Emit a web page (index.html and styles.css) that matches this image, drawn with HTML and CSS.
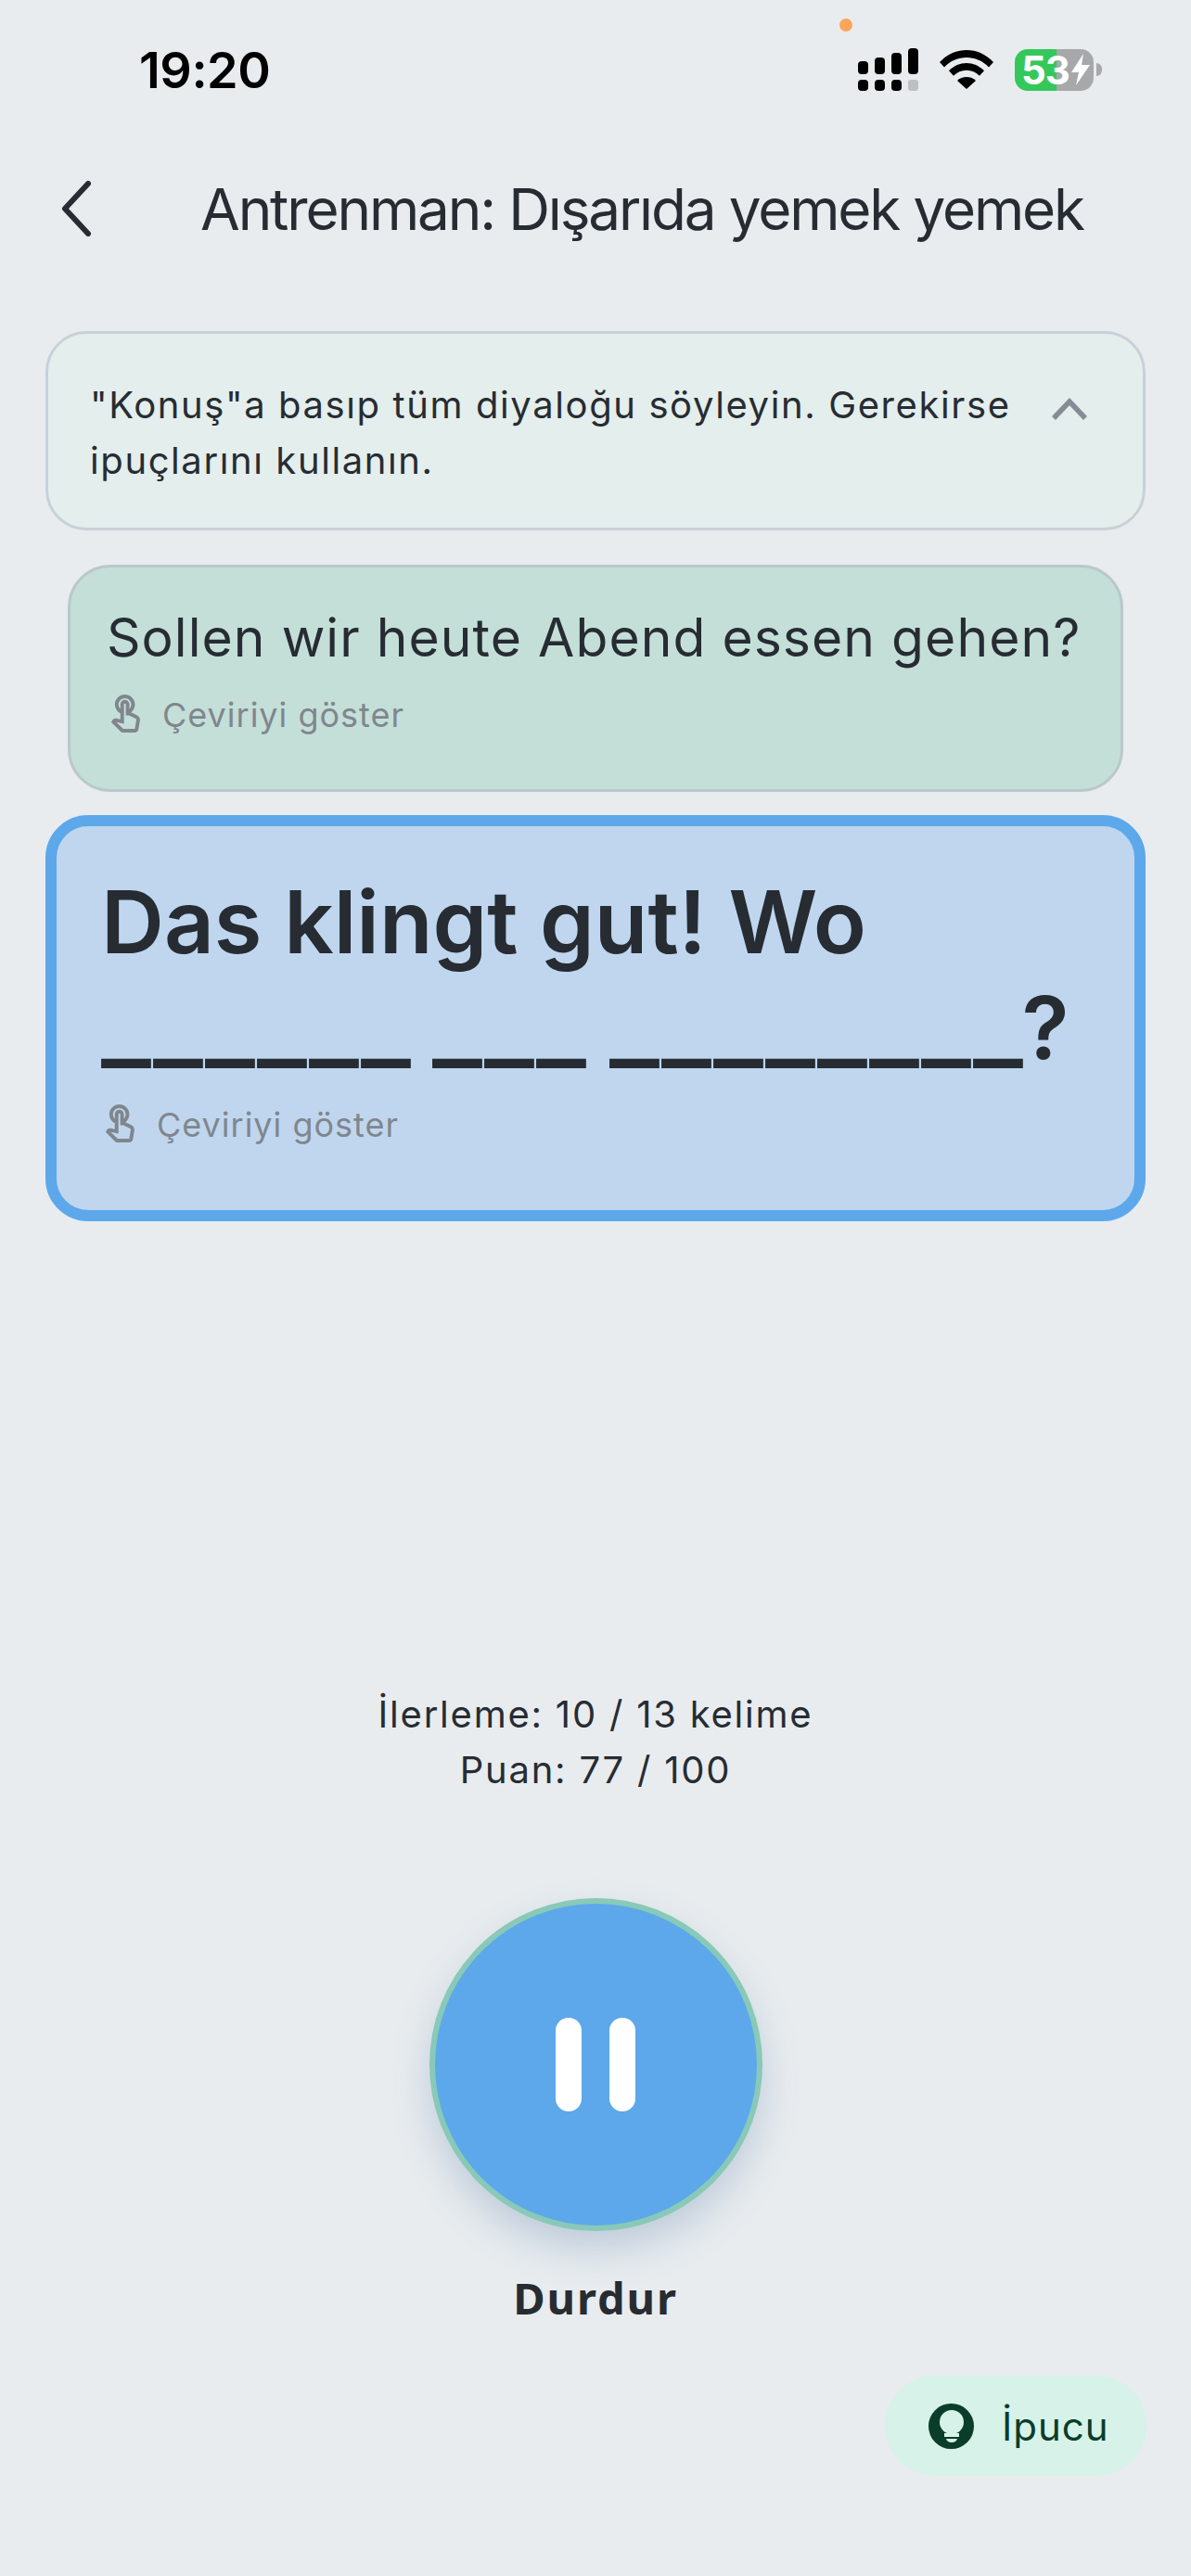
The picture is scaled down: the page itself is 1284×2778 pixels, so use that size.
FILE: index.html
```html
<!DOCTYPE html>
<html lang="tr">
<head>
  <meta charset="UTF-8">
  <title>Antrenman</title>
  <link rel="stylesheet" href="styles.css">
</head>
<body>
  <div class="screen">
    <span class="mic-dot"></span>
    <div class="status-bar">
      <span class="time">19:20</span>
      <div class="status-icons">
        <svg class="signal" width="65" height="46" viewBox="0 0 65 46" fill="#000">
          <rect x="0" y="14" width="11" height="14" rx="4"/>
          <rect x="18" y="10" width="11" height="18" rx="4"/>
          <rect x="36" y="5" width="11" height="23" rx="4"/>
          <rect x="54" y="0" width="11" height="28" rx="4"/>
          <rect x="0" y="34" width="11" height="12" rx="4"/>
          <rect x="18" y="34" width="11" height="12" rx="4"/>
          <rect x="36" y="34" width="11" height="12" rx="4"/>
          <rect x="54" y="34" width="11" height="12" rx="3" fill="#bcc0c3"/>
        </svg>
        <svg class="wifi" width="58" height="42" viewBox="0 0 58 42" fill="#000">
          <path d="M29 0C18 0 8 4.500 0 13l5 5.500C11.500 11.500 20 8 29 8s17.500 3.500 24 10.500l5-5.500C50 4.500 40 0 29 0z"/>
          <path d="M29 14c-7 0-13.500 2.800-19 8.200l5 5.600c3.800-3.800 8.700-6 14-6s10.200 2.200 14 6l5-5.600C42.500 16.800 36 14 29 14z"/>
          <path d="M29 29c-4 0-7.500 1.500-10 4l10 9 10-9c-2.500-2.500-6-4-10-4z"/>
        </svg>
        <div class="battery">
          <div class="battery-body">
            <span class="battery-level">53</span>
            <svg class="bolt" width="20" height="34" viewBox="0 0 20 34" fill="#fff">
              <path d="M13 0L0 20h8l-3 14L20 12h-9z"/>
            </svg>
          </div>
          <span class="battery-cap"></span>
        </div>
      </div>
    </div>

    <div class="top-bar">
      <svg class="back" width="40" height="60" viewBox="0 0 40 60" fill="none" stroke="#272c33" stroke-width="6" stroke-linecap="round" stroke-linejoin="round">
        <path d="M32 3L7 30l25 27"/>
      </svg>
      <h1 class="title">Antrenman: Dışarıda yemek yemek</h1>
    </div>

    <div class="info-box">
      <p class="info-text">"Konuş"a basıp tüm diyaloğu söyleyin. Gerekirse ipuçlarını kullanın.</p>
      <svg class="info-toggle" width="38" height="24" viewBox="0 0 38 24" fill="none" stroke="#868c94" stroke-width="5.500">
        <path d="M2 22L19 4l17 18"/>
      </svg>
    </div>

    <div class="line-card line-done">
      <p class="line-text">Sollen wir heute Abend essen gehen?</p>
      <div class="translate-row">
        <svg class="touch" width="47" height="47" viewBox="0 0 24 24" fill="#80868e"><path d="M18.19 12.44l-3.24-1.62c1.29-1 2.12-2.56 2.12-4.320 0-3.030-2.470-5.500-5.500-5.500s-5.500 2.470-5.500 5.500c0 2.130 1.220 3.980 3 4.890v3.260l-2.150-.45c-.16-.03-.31-.05-.49-.05-.53 0-1.040.21-1.420.59L4 16.170l5.090 5.090c.43.44 1.030.69 1.650.69h6.300c.98 0 1.810-.7 1.970-1.670l.8-4.710c.22-1.300-.43-2.580-1.620-3.130zm-.35 2.800l-.8 4.710h-6.300c-.09 0-.17-.04-.24-.1l-3.680-3.680 4.250.89V6.500c0-.28.22-.5.5-.5s.5.22.5.5v6h1.760l3.460 1.730c.4.2.62.63.55 1.010zM8.070 6.500c0-1.930 1.570-3.500 3.500-3.500s3.500 1.570 3.500 3.500c0 .95-.38 1.810-1 2.440V6.500c0-1.380-1.120-2.500-2.500-2.500s-2.500 1.120-2.500 2.500v2.440c-.62-.63-1-1.490-1-2.440z"/></svg>
        <span>Çeviriyi göster</span>
      </div>
    </div>

    <div class="line-card line-active">
      <p class="line-text">Das klingt gut! Wo <span class="blank blank-6">______</span> <span class="blank blank-3">___</span> <span class="blank blank-8">________</span>?</p>
      <div class="translate-row">
        <svg class="touch" width="47" height="47" viewBox="0 0 24 24" fill="#80868e"><path d="M18.19 12.44l-3.24-1.62c1.29-1 2.12-2.56 2.12-4.320 0-3.030-2.470-5.500-5.500-5.500s-5.500 2.470-5.500 5.500c0 2.130 1.220 3.980 3 4.890v3.260l-2.150-.45c-.16-.03-.31-.05-.49-.05-.53 0-1.040.21-1.420.59L4 16.170l5.090 5.090c.43.44 1.030.69 1.650.69h6.300c.98 0 1.810-.7 1.970-1.670l.8-4.710c.22-1.300-.43-2.580-1.620-3.130zm-.35 2.800l-.8 4.710h-6.300c-.09 0-.17-.04-.24-.1l-3.680-3.680 4.250.89V6.500c0-.28.22-.5.5-.5s.5.22.5.5v6h1.760l3.460 1.730c.4.2.62.63.55 1.010zM8.070 6.500c0-1.930 1.570-3.500 3.500-3.500s3.500 1.570 3.500 3.500c0 .95-.38 1.810-1 2.440V6.500c0-1.380-1.120-2.500-2.500-2.500s-2.500 1.120-2.500 2.500v2.440c-.62-.63-1-1.490-1-2.440z"/></svg>
        <span>Çeviriyi göster</span>
      </div>
    </div>

    <div class="progress">
      <div>İlerleme: 10 / 13 kelime</div>
      <div>Puan: 77 / 100</div>
    </div>

    <div class="controls">
      <button class="pause-btn">
        <span class="pause-bar"></span>
        <span class="pause-bar"></span>
      </button>
      <div class="pause-label">Durdur</div>
    </div>

    <button class="hint-btn">
      <svg width="49" height="49" viewBox="0 0 49 49">
        <circle cx="24.500" cy="24.500" r="24.500" fill="#0a3d2a"/>
        <circle cx="25" cy="20" r="13" fill="#d7f2e8"/>
        <rect x="17" y="32" width="16" height="4" fill="#d7f2e8"/>
        <path d="M19 38h12c-.6 2.500-3 4-6 4s-5.400-1.500-6-4z" fill="#d7f2e8"/>
      </svg>
      <span>İpucu</span>
    </button>
  </div>
</body>
</html>
```

FILE: styles.css
```css
* {
  box-sizing: border-box;
}
html, body {
  margin: 0;
  padding: 0;
}
body {
  font-family: Inter, "Noto Sans", sans-serif;
  background: #e8ecef;
  color: #272c33;
}
p, h1 {
  margin: 0;
}
.screen {
  position: relative;
  width: 1284px;
  height: 2778px;
  padding: 52px 49px 0;
  background: #e8ecef;
}
.mic-dot {
  position: absolute;
  left: 905px;
  top: 20px;
  width: 14px;
  height: 14px;
  border-radius: 50%;
  background: #fba55a;
}

/* status bar */
.status-bar {
  display: flex;
  justify-content: space-between;
  align-items: center;
  height: 46px;
  padding: 0 0 0 101px;
}
.time {
  font-size: 54px;
  font-weight: 600;
  letter-spacing: -0.500px;
  color: #000;
}
.status-icons {
  display: flex;
  align-items: center;
  margin-right: 47px;
}
.signal {
  margin-right: 23px;
}
.wifi {
  margin-right: 23px;
}
.battery {
  display: flex;
  align-items: center;
  gap: 3px;
}
.battery-body {
  display: flex;
  align-items: center;
  width: 85px;
  height: 45px;
  padding-left: 7px;
  border-radius: 14px;
  background: linear-gradient(90deg, #34c85a 53%, #a6a8aa 53%);
}
.battery-level {
  font-size: 42px;
  font-weight: 700;
  letter-spacing: -1px;
  color: #fff;
}
.bolt {
  margin-left: 2px;
}
.battery-cap {
  width: 6px;
  height: 14px;
  border-radius: 0 7px 7px 0;
  background: #a6a8aa;
}

/* header */
.top-bar {
  display: flex;
  align-items: center;
  height: 100px;
  margin-top: 77px;
}
.back {
  margin-left: 14px;
}
.title {
  margin-left: 113px;
  font-size: 62px;
  font-weight: 400;
  letter-spacing: -2.150px;
  white-space: nowrap;
}

/* instruction box */
.info-box {
  display: flex;
  align-items: flex-start;
  justify-content: space-between;
  height: 215px;
  margin-top: 82px;
  padding: 47px 60px 0 45px;
  border: 3px solid #c8d1d8;
  border-radius: 44px;
  background: #e4eeec;
}
.info-text {
  width: 1020px;
  font-size: 40px;
  line-height: 60px;
  letter-spacing: 1.600px;
}
.info-toggle {
  margin-top: 22px;
}

/* dialogue cards */
.line-card {
  border-style: solid;
}
.line-done {
  height: 245px;
  margin: 37px 24px 0;
  padding: 40px 0 0 39px;
  border-width: 3px;
  border-color: #b9c9cb;
  border-radius: 46px;
  background: #c4dfd8;
}
.line-done .line-text {
  font-size: 57px;
  line-height: 72px;
  letter-spacing: 1.050px;
  white-space: nowrap;
}
.line-active {
  height: 438px;
  margin-top: 25px;
  padding: 46px 0 0 48px;
  border-width: 12px;
  border-color: #5da8ea;
  border-radius: 46px;
  background: #bfd6ee;
}
.line-active .line-text {
  font-size: 94px;
  font-weight: 600;
  line-height: 114px;
}
/* blanks are wider than the font's underscore, so stretch them */
.blank {
  display: inline-block;
  font-family: Roboto, sans-serif;
  font-size: 96px;
  font-weight: 700;
  letter-spacing: 1.600px;
  line-height: 0;
  white-space: nowrap;
  transform: scaleX(1.264);
  transform-origin: left;
}
.blank-3 {
  width: 166.800px;
}
.blank-6 {
  width: 333.600px;
}
.blank-8 {
  width: 444.800px;
}
.translate-row {
  display: flex;
  align-items: center;
  gap: 16px;
  margin-top: 24px;
  font-size: 36px;
  letter-spacing: 1px;
  color: #80868e;
}
.line-done .translate-row {
  margin-top: 23px;
  margin-left: -3px;
}
.line-active .translate-row {
  margin-left: -3px;
}

/* progress text */
.progress {
  margin-top: 502px;
  font-size: 40px;
  line-height: 60px;
  letter-spacing: 1.770px;
  text-align: center;
}

/* pause button */
.controls {
  display: flex;
  flex-direction: column;
  align-items: center;
  margin-top: 108px;
}
.pause-btn {
  display: flex;
  align-items: center;
  justify-content: center;
  gap: 30px;
  width: 359px;
  height: 359px;
  padding: 0;
  border: 6px solid #88c9b8;
  border-radius: 50%;
  background: #5da8ea;
  box-shadow: 0 20px 40px rgba(70, 110, 160, 0.25);
}
.pause-bar {
  width: 28px;
  height: 101px;
  border-radius: 14px;
  background: #fff;
}
.pause-label {
  margin-top: 40px;
  font-family: "Noto Sans", sans-serif;
  font-size: 47px;
  font-weight: 700;
  letter-spacing: 1.900px;
}

/* hint pill */
.hint-btn {
  position: absolute;
  left: 954px;
  top: 2562px;
  display: flex;
  align-items: center;
  gap: 30px;
  width: 282px;
  height: 108px;
  padding: 0 0 0 47px;
  border: none;
  border-radius: 54px;
  background: #d7f2e8;
  font-family: Inter, sans-serif;
  font-size: 42px;
  letter-spacing: 1px;
  color: #0a3d2a;
}
```
